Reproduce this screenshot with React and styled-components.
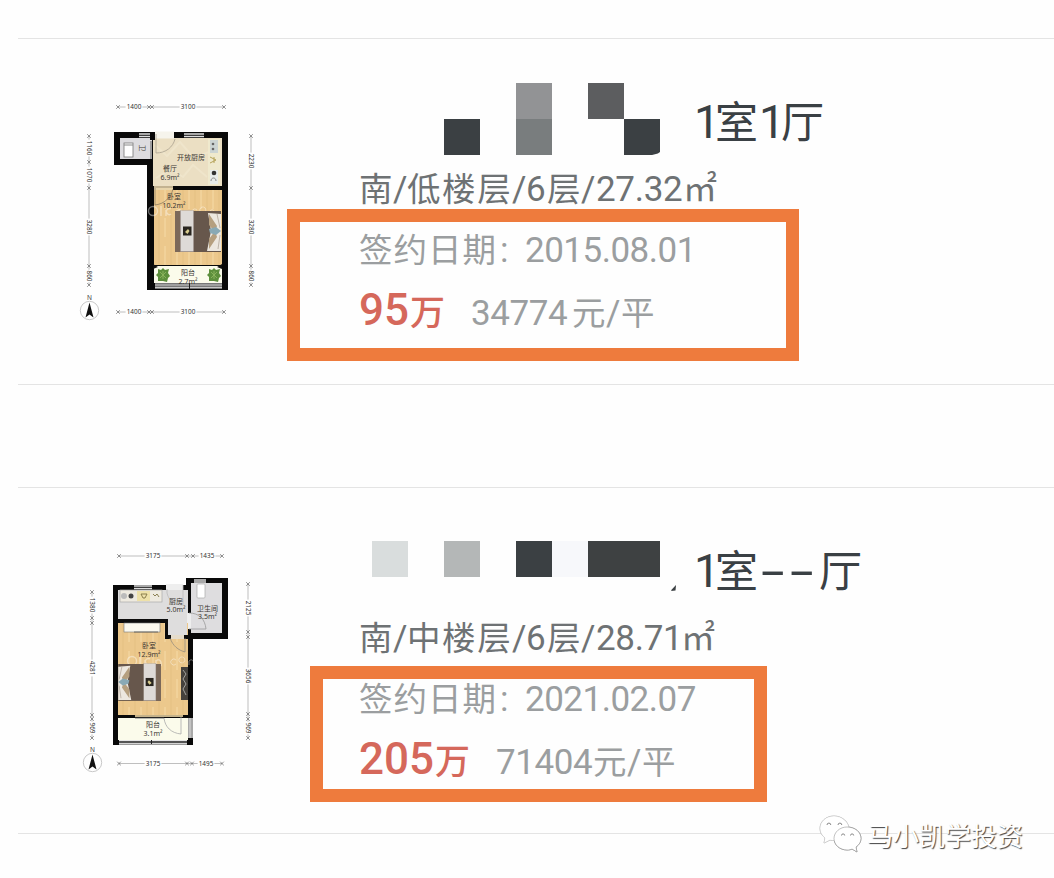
import React from "react";
import styled, { createGlobalStyle } from "styled-components";

const GlobalStyle = createGlobalStyle`
  * { box-sizing: border-box; }
  body { margin: 0; background: #fefefe; }
`;

const latin = `Roboto, "Noto Sans CJK SC", sans-serif`;
const cjk = `"Noto Sans CJK SC", sans-serif`;

const Page = styled.main`
  position: relative;
  width: 1054px;
  height: 878px;
  padding-top: 38px;
  overflow: hidden;
  background: #fefefe;
`;

const Card = styled.article`
  position: relative;
  display: flex;
  height: 347px;
  margin: 0 0 102px 18px;
  padding-left: 52px;
  border-top: 1px solid #e4e4e4;
  border-bottom: 1px solid #e4e4e4;
`;

const Plan = styled.svg`
  flex: none;
  width: 200px;
  height: 240px;
  margin-top: ${(p) => p.$top}px;
  overflow: visible;
`;

const Info = styled.div`
  margin: 44px 0 0 89px;
`;

const TitleRow = styled.div`
  display: flex;
  height: 70px;
  padding-left: 13px;
`;

const Mosaic = styled.div`
  position: relative;
  display: grid;
  grid-template-columns: repeat(8, 36px);
  grid-auto-rows: 36px;
  width: 288px;
  margin: ${(p) => p.$top}px 34px 0 0;
`;

const Tile = styled.i`
  background: ${(p) => p.$color};
  clip-path: ${(p) => (p.$cut ? "polygon(0 0, 100% 0, 100% 92%, 94% 96%, 78% 100%, 0 100%)" : "none")};
`;

const Remnant = styled.i`
  position: absolute;
  left: 299px;
  top: 44px;
  width: 5px;
  height: 6px;
  background: #3b4043;
  clip-path: polygon(100% 0, 90% 90%, 0 100%, 20% 70%);
`;

const Line = styled.div`
  display: flex;
  align-items: baseline;
  height: ${(p) => p.$h}px;
  line-height: ${(p) => p.$lh || p.$h}px;
  color: ${(p) => p.$color};
  white-space: nowrap;
`;

const Run = styled.span`
  flex: none;
  width: ${(p) => p.$w}px;
  margin-left: ${(p) => p.$ml || 0}px;
  font-family: ${(p) => (p.$cjk ? cjk : latin)};
  font-size: ${(p) => p.$size}px;
  font-weight: ${(p) => p.$weight || 400};
  letter-spacing: ${(p) => p.$ls || 0}px;
  color: ${(p) => p.$color || "inherit"};
`;

const Dashes = styled(Run)`
  transform: scaleX(1.85);
  transform-origin: left;
`;

const Highlight = styled.div`
  position: absolute;
  left: ${(p) => p.$x}px;
  top: ${(p) => p.$y}px;
  width: ${(p) => p.$w}px;
  height: ${(p) => p.$h}px;
  border: 13px solid #ee7b3d;
`;

const Watermark = styled.footer`
  position: absolute;
  left: 819px;
  top: 814px;
  display: flex;
  align-items: center;
  height: 42px;
  font: 400 26px/42px ${cjk};
  color: #fff;
  text-shadow: 1px 1px 1px #444;
`;

const WeChat = styled.svg`
  width: 44px;
  height: 40px;
  margin-right: 4px;
  filter: drop-shadow(0.6px 0.8px 0.4px #777);
`;

const Label = ({ x, y, size = 7, children }) => (
  <text x={x} y={y} fontSize={size} textAnchor="middle" fill="#3c3834" fontFamily={`"Noto Sans", "Noto Sans CJK SC", sans-serif`}>
    {children}
  </text>
);

/* A dimension line: an axis with arrow marks and measured labels */
function Dims({ at, vertical, marks, labels }) {
  const place = (v) => (vertical ? `translate(${at} ${v}) rotate(90)` : `translate(${v} ${at})`);
  const first = marks[0];
  const last = marks[marks.length - 1];
  return (
    <g>
      <path
        d={vertical ? `M${at} ${first}V${last}` : `M${first} ${at}H${last}`}
        stroke="#a3a3a3"
        strokeWidth=".7"
      />
      {marks.map((m) => (
        <path key={m} transform={place(m)} d="M-1.8-1.8 1.8 1.8M-1.8 1.8 1.8-1.8" stroke="#666" strokeWidth=".7" />
      ))}
      {labels.map(([v, t]) => (
        <g key={v} transform={place(v)}>
          <rect x={-t.length * 2.1} y="-3" width={t.length * 4.2} height="6" fill="#fefefe" />
          <text y="2.3" fontSize="6.4" textAnchor="middle" fill="#333" fontFamily={`"Noto Sans", sans-serif`}>
            {t}
          </text>
        </g>
      ))}
    </g>
  );
}

const Compass = ({ x, y }) => (
  <g>
    <circle cx={x} cy={y} r="9.2" fill="#fefefe" stroke="#bbb" strokeWidth=".8" />
    <path d={`M${x} ${y - 8}l4 15-4-3-4 3z`} fill="#111" />
    <text x={x} y={y - 11} fontSize="6.5" textAnchor="middle" fill="#444" fontFamily={`"Noto Sans", sans-serif`}>N</text>
  </g>
);

const Wood = ({ x, y, w, h }) => (
  <g>
    <rect x={x} y={y} width={w} height={h} fill="#ecc88c" />
    {Array.from({ length: Math.floor(w / 6) }, (_, i) => (
      <path
        key={i}
        d={`M${x + 5 + i * 6} ${y}v${h}`}
        stroke={i % 2 ? "#f4d9a5" : "#dcb472"}
        strokeWidth={i % 2 ? 1.8 : 0.6}
        opacity=".65"
        strokeDasharray={i % 2 ? "19 9" : "none"}
      />
    ))}
  </g>
);

/* Faint brand ring and wave printed over the bedroom */
const Stamp = ({ x, y }) => (
  <g transform={`translate(${x} ${y})`} stroke="#fff" strokeWidth="1.4" opacity=".4">
    <circle cx="4" cy="0" r="4.5" />
    <path d="M12-5v10M17-1v6M22-2a3 3 0 1 0 .1 5M28-1v6M28 0c3-3 6 0 5 5" />
    <path d="M48-1a3 3 0 1 0 0 4M56 1a3 3 0 1 0-.1.1M61 4v-4c3-3 5 0 5 4" strokeWidth="1" />
  </g>
);

/* Double bed with its pillows to the right */
const Bed = ({ transform }) => (
  <g transform={transform}>
    <rect width="46" height="41" fill="#67574c" />
    <rect width="5.5" height="41" fill="#7b6859" />
    <rect x="5.5" y="-.5" width="13" height="41" fill="#dedad7" stroke="#a89d94" strokeWidth=".4" />
    <rect x="8" y="15.5" width="8.5" height="9" fill="#29251f" />
    <path d="M10 21l3-3 1.5 2-2 3z" fill="#d8cb8e" />
    <path d="M33 2l13 1v37H32l4-20z" fill="#ece7df" />
    <path d="M34 3l8 12-2 6-6-7zM34 38l8-12-2-6-6 8z" fill="#b59f7f" />
    <path d="M34 18l7-2 5 4-5 4-6-2z" fill="#89a9b5" />
    <path d="M42 3l3 14M43 38l2-14" stroke="#beb4a9" />
  </g>
);

const Plant = ({ x, y }) => (
  <g transform={`translate(${x} ${y})`}>
    <path d="M0-7 2-5 6-6 5-2 7 1 5 3 4 7 0 6-5 6-5 2-7 0-5-2-5-6-2-5z" fill="#5d8f3c" />
    <path d="M-3-3 3 3M3-3-3 3M0-4V4" stroke="#8db45e" strokeWidth=".9" />
  </g>
);

function PlanOne() {
  return (
    <Plan $top={51} viewBox="70 90 200 240" fill="none">
      <Dims at={107} marks={[118, 149, 152, 224]} labels={[[134, "1400"], [188, "3100"]]} />
      <Dims at={89} vertical marks={[136, 162, 188, 266, 285]} labels={[[148, "1160"], [175, "1070"], [227, "3280"], [276, "860"]]} />
      <Dims at={251} vertical marks={[136, 188, 266, 285]} labels={[[161, "2230"], [227, "3280"], [276, "860"]]} />
      <Dims at={312} marks={[118, 149, 152, 224]} labels={[[134, "1400"], [188, "3100"]]} />
      <path d="M114 132H228V290H147V165H114Z" fill="#090909" />
      <rect x="120" y="138" width="32" height="21" fill="#dddcdf" />
      <rect x="153" y="138" width="69" height="48" fill="#ebdfc3" />
      <path d="M155 145l12 11 13-14 14 16 22-9M156 178l15-9 12 8 10-12 14 12" stroke="#f6edd7" strokeWidth="2" opacity=".4" />
      <rect x="155" y="131.500" width="19" height="7" fill="#f6f4ec" />
      <path d="M139 134h11M139 136.500h11M184 134h20M184 136.500h20" stroke="#ddd" strokeWidth="1.5" />
      <path d="M151 141v18" stroke="#888" strokeWidth="1.500" />
      <path d="M150 132h5v8h-5z" fill="#090909" />
      <rect x="124" y="143" width="9" height="14" fill="#fff" stroke="#777" strokeWidth=".8" />
      <path d="M124 145h9" stroke="#888" />
      <path d="M156 134v19c10 0 17-6 19-14" stroke="#aaa18f" strokeWidth=".8" />
      <rect x="208" y="139" width="12" height="46" fill="#efe9cd" />
      <rect x="210" y="140" width="8" height="13" fill="#ccd4d3" />
      <rect x="210" y="170" width="8" height="14" fill="#e7eceb" />
      <circle cx="213" cy="144" r="1.300" fill="#666" /><circle cx="213" cy="149" r="1.300" fill="#666" />
      <path d="M210 157l6 3-6 3M214 157v6" stroke="#b6a45a" />
      <circle cx="214" cy="173" r="2.300" fill="#333" /><path d="M211 181c0-4 5-4 5 0" stroke="#888" />
      <Wood x={154} y={190} w={68} h={75} />
      <path d="M154 186h19v4h-19z" fill="#e8d5ab" />
      <path d="M154 187h19M155 188v17c9-1 16-7 18-16" stroke="#6d6455" strokeWidth=".6" />
      <Stamp x={149} y={211} />
      <Bed transform="translate(175 211)" />
      <rect x="154" y="266" width="68" height="17" fill="#fbfbeb" />
      <path d="M153 264l5 3-5 2zM222 264l-5 3 5 2z" fill="#111" />
      <Plant x={163} y={275} /><Plant x={214} y={275} />
      <path d="M155 283h67v6h-67z" fill="#777" />
      <path d="M155 285h67M155 287.500h67" stroke="#c9c9c9" />
      <path d="M189.500 283v6" stroke="#222" />
      <g transform="translate(142 148) rotate(90)"><Label x={0} y={2} size={6.5}>卫</Label></g>
      <Label x={191} y={160}>开放厨房</Label>
      <Label x={170} y={170.500}>餐厅</Label>
      <Label x={170} y={179.500}>6.9m²</Label>
      <Label x={174} y={198.500}>卧室</Label>
      <Label x={174} y={208}>10.2m²</Label>
      <Label x={188} y={274.500}>阳台</Label>
      <Label x={188} y={283.500}>2.7m²</Label>
      <Compass x={89.500} y={310.500} />
    </Plan>
  );
}

function PlanTwo() {
  return (
    <Plan $top={52} viewBox="70 540 200 240" fill="none">
      <Dims at={556} marks={[119, 187, 193, 222]} labels={[[153, "3175"], [207, "1435"]]} />
      <Dims at={92} vertical marks={[592, 618, 623, 715, 719, 738]} labels={[[605, "1380"], [668, "4281"], [728, "969"]]} />
      <Dims at={248} vertical marks={[584, 632, 637, 714, 719, 738]} labels={[[608, "2125"], [676, "3656"], [728, "969"]]} />
      <Dims at={763.500} marks={[119, 187, 192, 222]} labels={[[153, "3175"], [206, "1495"]]} />
      <path d="M113 585H186V578H228V639H193V745H113Z" fill="#090909" />
      <path d="M118 590H188V635H167V620H118Z" fill="#dedddd" />
      <rect x="191" y="583" width="31" height="50" fill="#dedddf" />
      <path d="M166 584h17v6h-17z" fill="#eee" />
      <path d="M134 586h18M134 588.500h18M194 580h12M194 582h12" stroke="#ddd" strokeWidth="1.400" />
      <rect x="120" y="590" width="42" height="12" fill="#eeeae0" stroke="#aaa" strokeWidth=".7" />
      <rect x="137" y="591" width="13" height="10" fill="#eee1a9" />
      <circle cx="124" cy="596" r="3" fill="#bbb" /><circle cx="131" cy="596" r="2.500" fill="#444" />
      <path d="M141 594h6l-2 4h-2zM153 594l2 2 2-2 2 3" stroke="#7f7444" strokeWidth=".9" />
      <rect x="197" y="584" width="8" height="14" rx="1" fill="#fff" stroke="#aaa" strokeWidth=".7" />
      <path d="M167 589v4c2 9 9 12 16 12v-20" stroke="#bbb" strokeWidth=".8" />
      <path d="M187 613h4v16h-4z" fill="#eee" />
      <path d="M189 613c10 0 16 6 17 16h-17" stroke="#999" strokeWidth=".8" />
      <Wood x={118} y={623} w={70} h={92} />
      <path d="M167 618h20v17h-20z" fill="#dedddd" />
      <path d="M118 619H168V635H171V639H165V623H118Z" fill="#0c0c0c" />
      <path d="M184 635h5v4h-5z" fill="#0c0c0c" />
      <path d="M171 635h13v4h-13z" fill="#e5dccb" />
      <path d="M170 638c3 8 8 12 15 14v-14" stroke="#8e877c" strokeWidth=".7" />
      <rect x="124" y="623" width="36" height="9" fill="#fbf9ef" stroke="#777" strokeWidth=".6" />
      <path d="M134 632h24" stroke="#555" strokeWidth=".8" />
      <Stamp x={128} y={661} />
      <Bed transform="translate(161 664) scale(-.93 .9)" />
      <rect x="181" y="667" width="7" height="33" fill="#45413c" />
      <path d="M183 670l3 4-3 5 3 5-3 5 3 6" stroke="#a2a19d" />
      <rect x="118" y="718" width="70" height="22" fill="#fbfbeb" />
      <path d="M135 716h30M165 716h18" stroke="#c4b28a" strokeWidth="2" />
      <path d="M135 718h29" stroke="#555" strokeWidth=".8" />
      <path d="M164 718c1 9 7 15 17 16v-17" stroke="#aaa" strokeWidth=".8" />
      <path d="M188 718h5v20h-5z" fill="#a9a9a9" /><path d="M190 718v20" stroke="#ddd" />
      <path d="M119 740h68v5h-68z" fill="#888" />
      <path d="M119 740.500h68M119 743.700h68" stroke="#e6e6e6" />
      <path d="M119 742h68M151.500 740v4" stroke="#222" />
      <Label x={176} y={604}>厨房</Label>
      <Label x={176} y={612}>5.0m²</Label>
      <Label x={207.500} y={611}>卫生间</Label>
      <Label x={207.500} y={619}>3.5m²</Label>
      <Label x={149} y={648}>卧室</Label>
      <Label x={149} y={656.500}>12.9m²</Label>
      <Label x={153} y={727}>阳台</Label>
      <Label x={153} y={735.500}>3.1m²</Label>
      <Compass x={92.500} y={762.500} />
    </Plan>
  );
}

function Detail({ level, area, areaWidth }) {
  return (
    <Line $h={68} $color="#6e7274">
      <Run $cjk $size={33.500} $w={34}>南</Run>
      <Run $size={35} $w={14}>/</Run>
      <Run $cjk $size={33.500} $ls={1.600} $w={105}>{level}</Run>
      <Run $size={35} $w={14}>/</Run>
      <Run $size={35} $w={21}>6</Run>
      <Run $cjk $size={33.500} $w={34}>层</Run>
      <Run $size={35} $w={15}>/</Run>
      <Run $size={35} $ls={-0.3} $w={areaWidth}>{area}</Run>
      <Run $cjk $size={34} $w={36}>㎡</Run>
    </Line>
  );
}

function SignDate({ value }) {
  return (
    <Line $h={54} $color="#9b9ea0">
      <Run $cjk $size={33.500} $ls={1} $w={138}>签约日期</Run>
      <Run $size={35} $w={25} $ml={3}>:</Run>
      <Run $size={35} $ls={-0.500} $w={175}>{value}</Run>
    </Line>
  );
}

function Price({ total, totalWidth, unit, unitWidth }) {
  return (
    <Line $h={68} $lh={70} $color="#9b9ea0">
      <Run $size={44} $weight={500} $w={totalWidth} $color="#d5685b">{total}</Run>
      <Run $cjk $size={35} $weight={500} $w={61} $color="#d5685b">万</Run>
      <Run $size={35} $ls={-0.400} $w={unitWidth}>{unit}</Run>
      <Run $cjk $size={33.500} $w={34}>元</Run>
      <Run $size={35} $w={15}>/</Run>
      <Run $cjk $size={33.500} $w={34}>平</Run>
    </Line>
  );
}

const TITLE = "#3a4044";

export default function App() {
  return (
    <Page>
      <GlobalStyle />
      <Card>
        <PlanOne />
        <Info>
          <TitleRow>
            <Mosaic $top={0}>
              {["", "", "", "", "#929395", "", "#5c5d5f", "", "", "", "#3b4043", "", "#797d7e", "", "", "#3b4043"].map((c, i) => (
                <Tile key={i} $color={c || "transparent"} $cut={i === 15} />
              ))}
            </Mosaic>
            <Line $h={72} $color={TITLE}>
              <Run $size={46} $ls={-5} $w={21}>1</Run>
              <Run $cjk $size={43} $w={44}>室</Run>
              <Run $size={46} $ls={-5} $w={22}>1</Run>
              <Run $cjk $size={43} $w={44}>厅</Run>
            </Line>
          </TitleRow>
          <Detail level="低楼层" area="27.32" areaWidth={87} />
          <SignDate value="2015.08.01" />
          <Price total="95" totalWidth={51} unit="34774" unitWidth={101} />
        </Info>
        <Highlight $x={269} $y={170} $w={512} $h={152} />
      </Card>
      <Card>
        <PlanTwo />
        <Info>
          <TitleRow>
            <Mosaic $top={9}>
              {["#d9dddd", "", "#b4b7b7", "", "#3b4043", "#f7f8fb", "#3e4142", "#3e4142"].map((c, i) => (
                <Tile key={i} $color={c || "transparent"} />
              ))}
              <Remnant />
            </Mosaic>
            <Line $h={72} $color={TITLE}>
              <Run $size={46} $ls={-5} $w={21}>1</Run>
              <Run $cjk $size={43} $w={46}>室</Run>
              <Dashes $size={46} $ls={3} $w={58}>--</Dashes>
              <Run $cjk $size={43} $w={44}>厅</Run>
            </Line>
          </TitleRow>
          <Detail level="中楼层" area="28.71" areaWidth={85} />
          <SignDate value="2021.02.07" />
          <Price total="205" totalWidth={76} unit="71404" unitWidth={97} />
        </Info>
        <Highlight $x={292} $y={178} $w={457} $h={136} />
      </Card>
      <Watermark>
        <WeChat viewBox="0 0 44 40">
          <path d="M15 1C7 1 1 6.500 1 13.500c0 4 2 7 5 9.500L5 28l6-3c2 .5 3 .6 5 .6C24 26 30 21 30 14S23 1 15 1z" fill="#fff" stroke="#ddd" strokeWidth=".5" />
          <path d="M28 12c-7 0-13 5-13 11.500S21 35 28 35c2 0 4-.3 5-1l5 3-1-5c3-2 5-5 5-8.500C42 17 36 12 28 12z" fill="#fff" stroke="#999" strokeWidth=".6" />
          <g stroke="#888" strokeWidth="1" fill="none"><path d="M8 10a1.900 1.900 0 0 1 3.800 0M19 10a1.900 1.900 0 0 1 3.800 0M22.500 20.500a1.600 1.600 0 0 1 3.200 0M31.500 20.500a1.600 1.600 0 0 1 3.200 0" /></g>
        </WeChat>
        马小凯学投资
      </Watermark>
    </Page>
  );
}
